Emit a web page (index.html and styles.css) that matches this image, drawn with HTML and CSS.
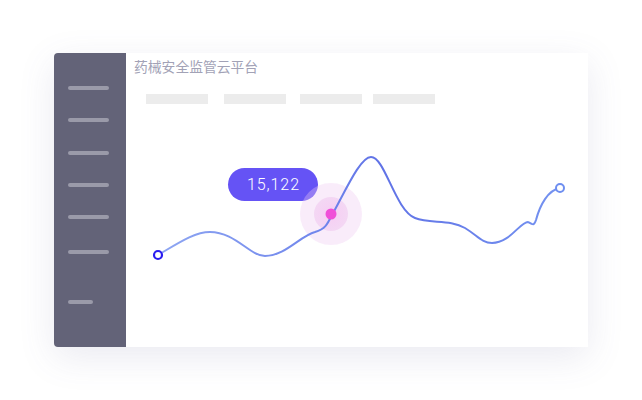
FILE: index.html
```html
<!DOCTYPE html>
<html lang="zh">
<head>
<meta charset="utf-8">
<link rel="stylesheet" href="styles.css">
</head>
<body>
<div class="card">
  <aside class="sidebar">
    <span class="line l1"></span>
    <span class="line"></span>
    <span class="line"></span>
    <span class="line"></span>
    <span class="line"></span>
    <span class="line l6"></span>
    <span class="line short"></span>
  </aside>
  <main class="main">
    <h1 class="title">药械安全监管云平台</h1>
    <div class="tabs">
      <span class="tab"></span>
      <span class="tab t2"></span>
      <span class="tab t3"></span>
      <span class="tab t4"></span>
    </div>
    <div class="tooltip">15,122</div>
    <svg class="chart" viewBox="126 53 462 294" width="462" height="294">
      <defs>
        <linearGradient id="lg" x1="158" y1="0" x2="560" y2="0" gradientUnits="userSpaceOnUse">
          <stop offset="0" stop-color="#8ea6f2"/>
          <stop offset="0.4" stop-color="#7086ec"/>
          <stop offset="0.55" stop-color="#6072e6"/>
          <stop offset="1" stop-color="#7492f0"/>
        </linearGradient>
        <radialGradient id="rg" cx="0.5" cy="0.5" r="0.5">
          <stop offset="0" stop-color="#f6c6f2"/>
          <stop offset="1" stop-color="#f2d2f2"/>
        </radialGradient>
      </defs>
      <circle cx="331" cy="214" r="31" fill="rgba(238,200,240,0.35)"/>
      <circle cx="331" cy="214" r="17" fill="url(#rg)" opacity="0.8"/>
      <path d="M158,255 C180,242 195,232 210,232 C235,232 250,256 265,256 C285,256 300,236 315,232 C325,229 327,225 332,215 C345,192 360,157 371,157 C385,157 395,210 415,218 C430,224 450,219 465,228 C478,236 482,243 492,243 C510,243 520,222 528,222 C533,225 534,226 536,220 C540,205 548,190 560,188" fill="none" stroke="url(#lg)" stroke-width="2" stroke-linecap="round"/>
      <circle cx="331" cy="214" r="5.5" fill="#f04fd8"/>
      <circle cx="158" cy="255" r="4" fill="#fff" stroke="#2a1cf0" stroke-width="2.2"/>
      <circle cx="560" cy="188" r="4" fill="#fff" stroke="#6e8ef0" stroke-width="2"/>
    </svg>
  </main>
</div>
</body>
</html>
```
FILE: styles.css
```css
html, body {
  margin: 0;
  padding: 0;
  background: #ffffff;
}
body {
  width: 642px;
  height: 400px;
  overflow: hidden;
  padding-top: 53px;
  padding-left: 54px;
  box-sizing: border-box;
}
.card {
  width: 534px;
  height: 294px;
  display: flex;
  background: #fff;
  border-radius: 4px 0 0 4px;
  box-shadow: 0 10px 36px rgba(90, 90, 150, 0.13);
}
.sidebar {
  width: 72px;
  flex: none;
  background: #636378;
  border-radius: 4px 0 0 4px;
  display: flex;
  flex-direction: column;
  padding: 33px 0 0 14px;
  box-sizing: border-box;
  gap: 28.3px;
}
.line {
  display: block;
  width: 41px;
  height: 4px;
  border-radius: 2px;
  background: #9a9aa9;
}
.l6 {
  margin-top: 3px;
}
.short {
  width: 25px;
  margin-top: 17px;
}
.main {
  position: relative;
  flex: 1;
  padding: 0 0 0 8px;
}
.title {
  margin: 3px 0 0 0;
  font-family: "Noto Sans CJK SC", "Noto Sans", sans-serif;
  font-size: 13.8px;
  font-weight: 400;
  line-height: 20px;
  color: #a2a2b6;
  letter-spacing: 0;
}
.tabs {
  display: flex;
  margin: 18px 0 0 12px;
  gap: 16px;
}
.tab {
  display: block;
  width: 62px;
  height: 10px;
  background: #ececec;
}
.t3 {
  margin-left: -2px;
}
.t4 {
  margin-left: -5px;
}
.tooltip {
  position: absolute;
  left: 102px;
  top: 115px;
  width: 90px;
  height: 33px;
  border-radius: 17px;
  background: #6553f5;
  color: #fff;
  font-family: Roboto, "Liberation Sans", sans-serif;
  font-size: 16px;
  font-weight: 300;
  letter-spacing: 0.9px;
  line-height: 33px;
  text-align: center;
  text-indent: 1px;
}
.chart {
  position: absolute;
  left: 0;
  top: 0;
}
```
